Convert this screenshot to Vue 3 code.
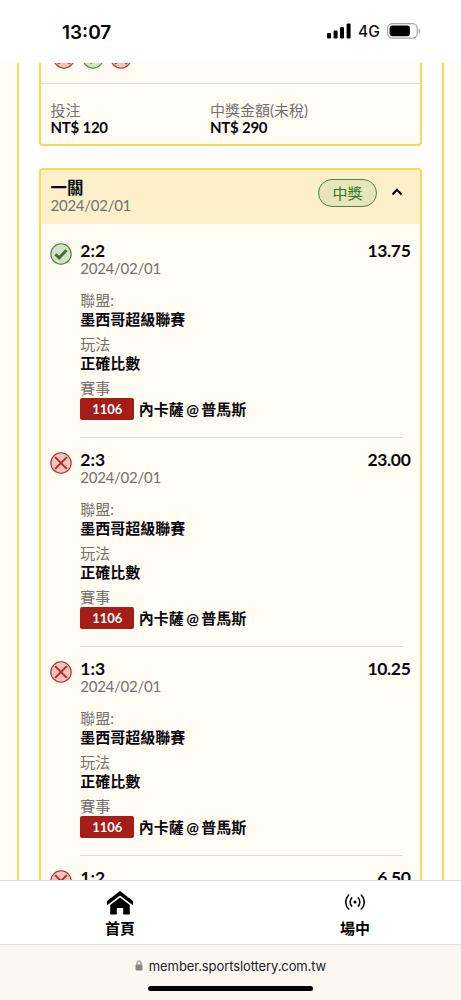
<script setup>
const facts = { date: '2024/02/01', league: '墨西哥超級聯賽', play: '正確比數', code: '1106', match: '內卡薩 @ 普馬斯' }
const legs = [
  { id: 1, score: '2:2', odds: '13.75', won: true, facts },
  { id: 2, score: '2:3', odds: '23.00', won: false, facts },
  { id: 3, score: '1:3', odds: '10.25', won: false, facts },
  { id: 4, score: '1:2', odds: '6.50', won: false },
]
const previous = [false, true, false]
</script>

<template>
  <div class="phone">
    <header class="status">
      <span class="clock">13:07</span>
      <div class="signals">
        <svg class="bars" width="24" height="16" viewBox="0 0 24 16">
          <rect x="0" y="10" width="4" height="5.5" rx="1.2" />
          <rect x="6.6" y="7.5" width="4" height="8" rx="1.2" />
          <rect x="13" y="4" width="4" height="11.5" rx="1.2" />
          <rect x="19.6" y="0.5" width="4" height="15" rx="1.2" />
        </svg>
        <span class="network">4G</span>
        <svg class="battery" width="34" height="16" viewBox="0 0 34 16">
          <rect x="0.6" y="0.6" width="29.6" height="14.6" rx="4.6" fill="none" stroke="#a5a5a5" stroke-width="1.2" />
          <rect x="2.6" y="2.6" width="20.4" height="10.6" rx="3" />
          <path d="M31.6 5.4v5c1-.4 1.6-1.4 1.6-2.5s-.6-2.1-1.6-2.5z" fill="#a5a5a5" />
        </svg>
      </div>
    </header>

    <main class="page">
      <div class="panel">
        <section class="card previous">
          <div class="results">
            <svg v-for="(won, i) in previous" :key="i" class="mark" :class="{ won }" viewBox="0 0 22 22">
              <circle cx="11" cy="11" r="10.2" />
              <path v-if="won" class="tick" d="M5.4 11.2l3.700 3.700 7.300-7.700" />
              <path v-else class="cross" d="M5.100 5.100l11.800 11.800M16.900 5.100l-11.800 11.800" />
            </svg>
          </div>
          <dl class="amounts">
            <div class="stake"><dt>投注</dt><dd>NT$ 120</dd></div>
            <div><dt>中獎金額(未稅)</dt><dd>NT$ 290</dd></div>
          </dl>
        </section>

        <section class="card current">
          <div class="head">
            <div>
              <h2>一關</h2>
              <p class="date">2024/02/01</p>
            </div>
            <span class="pill">中獎</span>
            <svg class="chevron" width="12" height="8" viewBox="0 0 12 8"><path d="M1.500 6.500L6 1.700l4.500 4.800" /></svg>
          </div>
          <article v-for="leg in legs" :key="leg.id" class="leg">
            <svg class="mark" :class="{ won: leg.won }" viewBox="0 0 22 22">
              <circle cx="11" cy="11" r="10.2" />
              <path v-if="leg.won" class="tick" d="M5.400 11.200l3.700 3.700 7.300-7.700" />
              <path v-else class="cross" d="M5.100 5.100l11.800 11.800M16.900 5.100l-11.800 11.800" />
            </svg>
            <div class="details">
              <div class="top"><strong>{{ leg.score }}</strong><strong class="odds">{{ leg.odds }}</strong></div>
              <template v-if="leg.facts">
                <p class="date">{{ leg.facts.date }}</p>
                <dl class="facts">
                  <dt>聯盟:</dt>
                  <dd>{{ leg.facts.league }}</dd>
                  <dt>玩法</dt>
                  <dd>{{ leg.facts.play }}</dd>
                  <dt>賽事</dt>
                  <dd class="match"><span class="code">{{ leg.facts.code }}</span><span class="teams">{{ leg.facts.match }}</span></dd>
                </dl>
              </template>
            </div>
          </article>
        </section>
      </div>
    </main>

    <nav class="tabs">
      <a class="tab home">
        <svg width="28" height="24" viewBox="0 0 28 24">
          <path d="M14 0L1 10v4.200L14 4.400l13 9.800V10z" />
          <path d="M14 6.400L4.200 14v9.600h6.600v-6.700h6.400v6.700h6.600V14z" />
        </svg>
        <span>首頁</span>
      </a>
      <a class="tab live">
        <svg width="20" height="16" viewBox="0 0 20 16">
          <circle cx="10" cy="8" r="1.600" />
          <g fill="none" stroke="#000" stroke-width="1.500" stroke-linecap="round">
            <path d="M6.800 3.900C4.600 6 4.600 10 6.800 12.100M13.200 3.900c2.200 2.100 2.200 6.100 0 8.200" />
            <path d="M3.700 1C-.3 4.700-.3 11.300 3.700 15M16.300 1c4 3.700 4 10.300 0 14" />
          </g>
        </svg>
        <span>場中</span>
      </a>
    </nav>

    <footer class="browser">
      <div class="address">
        <svg width="8" height="11" viewBox="0 0 8 11">
          <path d="M2 5V3a2 2 0 0 1 4 0v2" fill="none" stroke="#858585" stroke-width="1.100" />
          <rect x="0.500" y="4.600" width="7" height="5.900" rx="1" fill="#858585" />
        </svg>
        <span>member.sportslottery.com.tw</span>
      </div>
      <div class="indicator"></div>
    </footer>
  </div>
</template>

<style>
body {
  margin: 0;
  background: #fff;
}
</style>

<style scoped>
* {
  box-sizing: border-box;
}
p, h2, dl, dt, dd {
  margin: 0;
}
.phone {
  width: 461px;
  height: 1000px;
  display: flex;
  flex-direction: column;
  overflow: hidden;
  color: #0a0a0a;
  background: #fff;
  font: 15px/18px Lato, "Noto Sans CJK TC", sans-serif;
}
.status {
  flex: none;
  height: 63px;
  display: flex;
  justify-content: space-between;
  padding: 0 40px 0 62px;
  font-family: Inter, sans-serif;
}
.clock {
  font-size: 19px;
  font-weight: 600;
  line-height: 65px;
  color: #000;
}
.signals {
  display: flex;
  align-items: center;
  height: 62px;
}
.network {
  width: 22px;
  margin: 2px 7px 0 7px;
  font-size: 15.500px;
  font-weight: 500;
  color: #111;
}
.page {
  flex: none;
  height: 817px;
  padding: 0 17px;
  overflow: hidden;
  background: #fffcf4;
}
.panel {
  min-height: 817px;
  padding: 0 20px 0 19.500px;
  background: #fff;
  border: solid #f9d951;
  border-width: 0 2px;
}
.card {
  border: 2px solid #f9d951;
  border-radius: 4px;
  background: #fffcf4;
  overflow: hidden;
}
.previous {
  height: 83px;
  border-top: 0;
  border-radius: 0 0 4px 4px;
}
.results {
  display: flex;
  align-items: flex-end;
  gap: 6.500px;
  height: 20.500px;
  padding: 0 0 13.500px 12.500px;
  border-bottom: 1px solid #dfddd6;
}
.mark {
  flex: none;
  width: 22px;
  height: 22px;
  fill: #ebc5c0;
  stroke: #b8281f;
  stroke-width: 1.100;
}
.mark.won {
  fill: #d5dfca;
  stroke: #488038;
}
.cross {
  stroke-width: 1.900;
}
.tick {
  fill: none;
  stroke: #397528;
  stroke-width: 2.900;
}
.amounts {
  display: flex;
  padding: 18px 10px 0;
}
.stake {
  width: 159.500px;
}
dt, .date {
  height: 18px;
  line-height: 16px;
  color: #73726e;
}
.date {
  letter-spacing: -0.26px;
}
dd {
  font-weight: 700;
}
.amounts dt {
  height: 17px;
}
.amounts dd {
  line-height: 16px;
  letter-spacing: -0.240px;
}
.current {
  height: 760px;
  margin-top: 22px;
}
.head {
  display: flex;
  height: 54px;
  padding: 9px 17.500px 0 10px;
  background: #fbf0ca;
}
.head > div {
  flex: 1;
}
h2 {
  font-size: 16.500px;
  line-height: 18px;
}
.pill {
  width: 59px;
  height: 28px;
  border: 1px solid #527f42;
  border-radius: 14px;
  background: #e5e6ba;
  color: #39712b;
  text-align: center;
  line-height: 26px;
  font-size: 15px;
}
.chevron {
  margin: 9px 0 0 13.500px;
  fill: none;
  stroke: #000;
  stroke-width: 2;
}
.leg {
  display: flex;
  height: 209px;
  padding: 14px 9.500px 0 9.500px;
}
.leg .mark {
  margin-top: 0.500px;
}
.head + .leg {
  margin-top: 4px;
}
.details {
  flex: 1;
  margin-left: 8.300px;
}
.details::after {
  content: "";
  display: block;
  height: 1px;
  margin: 17px 7.500px 0 0;
  background: #dfddd6;
}
.top {
  display: flex;
  justify-content: space-between;
  height: 18px;
  font-size: 17.500px;
  line-height: 18px;
}
.odds {
  letter-spacing: -0.340px;
}
.facts {
  margin-top: 14px;
}
.facts dd {
  margin-bottom: 8px;
}
.facts dd.match {
  display: flex;
  align-items: center;
  gap: 4.500px;
  height: 22px;
  margin: 0;
}
.teams {
  word-spacing: -1.300px;
}
.code {
  width: 54px;
  height: 22px;
  border-radius: 2px;
  background: #a51d16;
  color: #fff;
  text-align: center;
  font-size: 13px;
  line-height: 22px;
}
.tabs {
  flex: none;
  height: 65px;
  display: flex;
  border: solid #dedede;
  border-width: 1px 0;
  background: #fff;
}
.tab {
  flex: none;
  display: flex;
  flex-direction: column;
  align-items: center;
  font-weight: 700;
  color: #000;
}
.tab svg {
  margin: 10px 0 4px;
}
.tab.home {
  width: 240px;
}
.tab.live {
  width: 221px;
  padding-left: 9px;
}
.tab.live svg {
  margin: 13px 0 9px;
}
.browser {
  flex: 1;
  display: flex;
  flex-direction: column;
  align-items: center;
  background: #faf8f1;
}
.address {
  display: flex;
  align-items: center;
  gap: 6px;
  height: 41px;
  color: #222;
  font: 13px/18px Inter, sans-serif;
  letter-spacing: -0.100px;
}
.indicator {
  width: 165px;
  height: 5px;
  border-radius: 3px;
  background: #000;
}
</style>
